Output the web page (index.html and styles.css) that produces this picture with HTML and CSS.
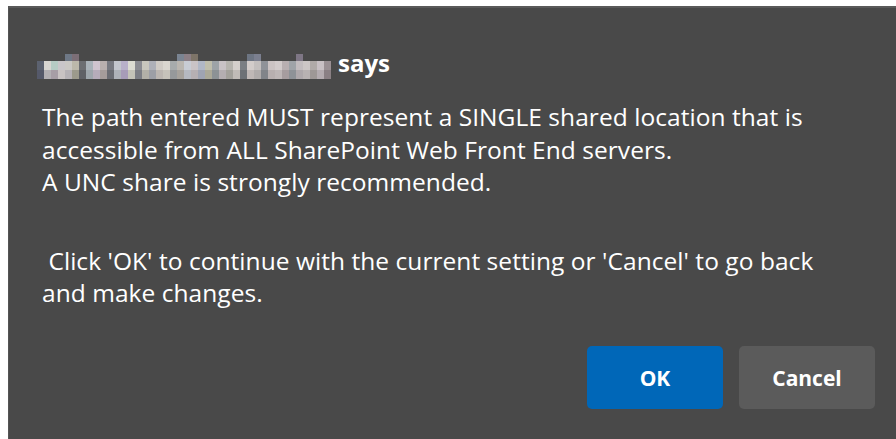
FILE: index.html
```html
<!DOCTYPE html>
<html lang="en">
<head>
<meta charset="utf-8">
<title>Confirm</title>
<link rel="stylesheet" href="styles.css">
</head>
<body>
<div class="page">
  <div class="dialog" role="dialog" aria-labelledby="dlg-title">
    <div class="title" id="dlg-title">
      <span class="host" aria-label="hidden host name"></span>
      <span class="says">says</span>
    </div>
    <div class="message">
      <p>The path entered MUST represent a SINGLE shared location that is accessible from ALL SharePoint Web Front End servers.<br>A UNC share is strongly recommended.</p>
      <p>&nbsp;Click 'OK' to continue with the current setting or 'Cancel' to go back and make changes.</p>
    </div>
    <div class="actions">
      <button class="btn btn-primary" type="button">OK</button>
      <button class="btn btn-secondary" type="button">Cancel</button>
    </div>
  </div>
</div>
</body>
</html>
```

FILE: styles.css
```css
html, body {
  margin: 0;
  padding: 0;
  background: #ffffff;
}

.page {
  padding: 6px 0 0 8px;
  height: 439px;
  box-sizing: border-box;
}

.dialog {
  height: 100%;
  box-sizing: border-box;
  background: #494949;
  border-top: 2px solid #5a5a5a;
  border-left: 1px solid #555555;
  padding: 39px 21px 30px 33px;
  display: flex;
  flex-direction: column;
  font-family: "Open Sans", "Noto Sans", sans-serif;
  color: #ffffff;
}

.title {
  display: flex;
  align-items: center;
  gap: 7px;
  font-size: 24px;
  font-weight: 700;
  line-height: 32px;
}

/* pixelated, obscured host name: four rows of 7px mosaic cells */
.host {
  display: block;
  width: 294px;
  height: 32px;
  margin-left: -5px;
  filter: blur(0.5px);
  background-repeat: no-repeat;
  background-size: 294px 7px, 294px 9px, 294px 9px, 294px 7px;
  background-position: 0 7px, 0 14px, 0 23px, 0 32px;
  background-image:
    linear-gradient(90deg,
      transparent 0 28px, #6e7886 28px 35px, #7c6e76 35px 42px, transparent 42px 140px,
      #7a8492 140px 147px, #8c7f86 147px 154px, #7d7468 154px 161px, transparent 161px 210px,
      #6d7583 210px 217px, #7b7f8f 217px 224px, transparent 224px 259px, #7e7685 259px 266px, transparent 266px),
    linear-gradient(90deg,
      #5c6270 0 7px, #d8d6d2 7px 14px, #b6cbc4 14px 21px, #c9c6c9 21px 28px, #cac8c4 28px 35px, #bcb8aa 35px 42px,
      #6c6e72 42px 49px, #a9b2b9 49px 56px, #d0c4cf 56px 63px, #b9b0ae 63px 70px, #777980 70px 77px,
      #c3c6cd 77px 84px, #b8b0c9 84px 91px, #dcdcd2 91px 98px, #8b8c92 98px 105px, #c8c6bd 105px 112px,
      #aeb0b8 112px 119px, #d0cbc5 119px 126px, #dad6cf 126px 133px, #a7abac 133px 140px, #bab6b0 140px 147px,
      #c8ccd4 147px 154px, #c9c3c6 154px 161px, #b0b7c6 161px 168px, #bfbeac 168px 175px, #9da3a7 175px 182px,
      #c8c2c5 182px 189px, #b6b4ae 189px 196px, #d4cfcb 196px 203px, #7a7e83 203px 210px, #d2ccca 210px 217px,
      #c3bfbe 217px 224px, #8f9298 224px 231px, #cbc3c3 231px 238px, #d2cbcb 238px 245px, #b8afb1 245px 252px,
      #9fa3a8 252px 259px, #c2bcbf 259px 266px, #ccc6c6 266px 273px, #b0aaa8 273px 280px, #c8c0c4 280px 287px, #9a9094 287px 294px),
    linear-gradient(90deg,
      #55596a 0 7px, #b3b0b4 7px 14px, #a79ea6 14px 21px, #c9c3c3 21px 28px, #b6b2b6 28px 35px, #9c9a8c 35px 42px,
      #5f6166 42px 49px, #9ea6ac 49px 56px, #b6acba 56px 63px, #a59c9b 63px 70px, #6a6c73 70px 77px,
      #aeb2b9 77px 84px, #a79cb8 84px 91px, #c4c3b8 91px 98px, #7c7e85 98px 105px, #b2b0a8 105px 112px,
      #9d9fa6 112px 119px, #bcb6b1 119px 126px, #c6c2ba 126px 133px, #96999b 133px 140px, #a6a29c 140px 147px,
      #b5b9c1 147px 154px, #b6b0b3 154px 161px, #9fa4b2 161px 168px, #aba998 168px 175px, #8c9295 175px 182px,
      #b4aeb1 182px 189px, #a3a19b 189px 196px, #c0bbb7 196px 203px, #6d7176 203px 210px, #bfb8b6 210px 217px,
      #b0acab 217px 224px, #818489 224px 231px, #b8b0b0 231px 238px, #beb7b7 238px 245px, #a69d9f 245px 252px,
      #8e9297 252px 259px, #aea8ab 259px 266px, #b8b2b2 266px 273px, #9e9896 273px 280px, #b4acb0 280px 287px, #8a8084 287px 294px),
    linear-gradient(90deg,
      transparent 0 84px, #7f8578 84px 91px, #77797e 91px 98px, transparent 98px 140px,
      #767a70 140px 147px, transparent 147px);
}

.message {
  margin-top: 22px;
  flex: 1;
  font-size: 24.5px;
  letter-spacing: 0.05px;
  line-height: 32.5px;
}

.message p {
  margin: 0 0 46px 0;
  max-width: 820px;
}

.message p:last-child {
  margin-bottom: 0;
}

.actions {
  display: flex;
  justify-content: flex-end;
  gap: 16px;
}

.btn {
  width: 136px;
  height: 63px;
  border: none;
  border-radius: 5px;
  font-family: "Open Sans", "Noto Sans", sans-serif;
  font-size: 21px;
  font-weight: 700;
  color: #ffffff;
  cursor: pointer;
}

.btn-primary {
  background: #0067b8;
}

.btn-secondary {
  background: #5b5b5b;
}
```
